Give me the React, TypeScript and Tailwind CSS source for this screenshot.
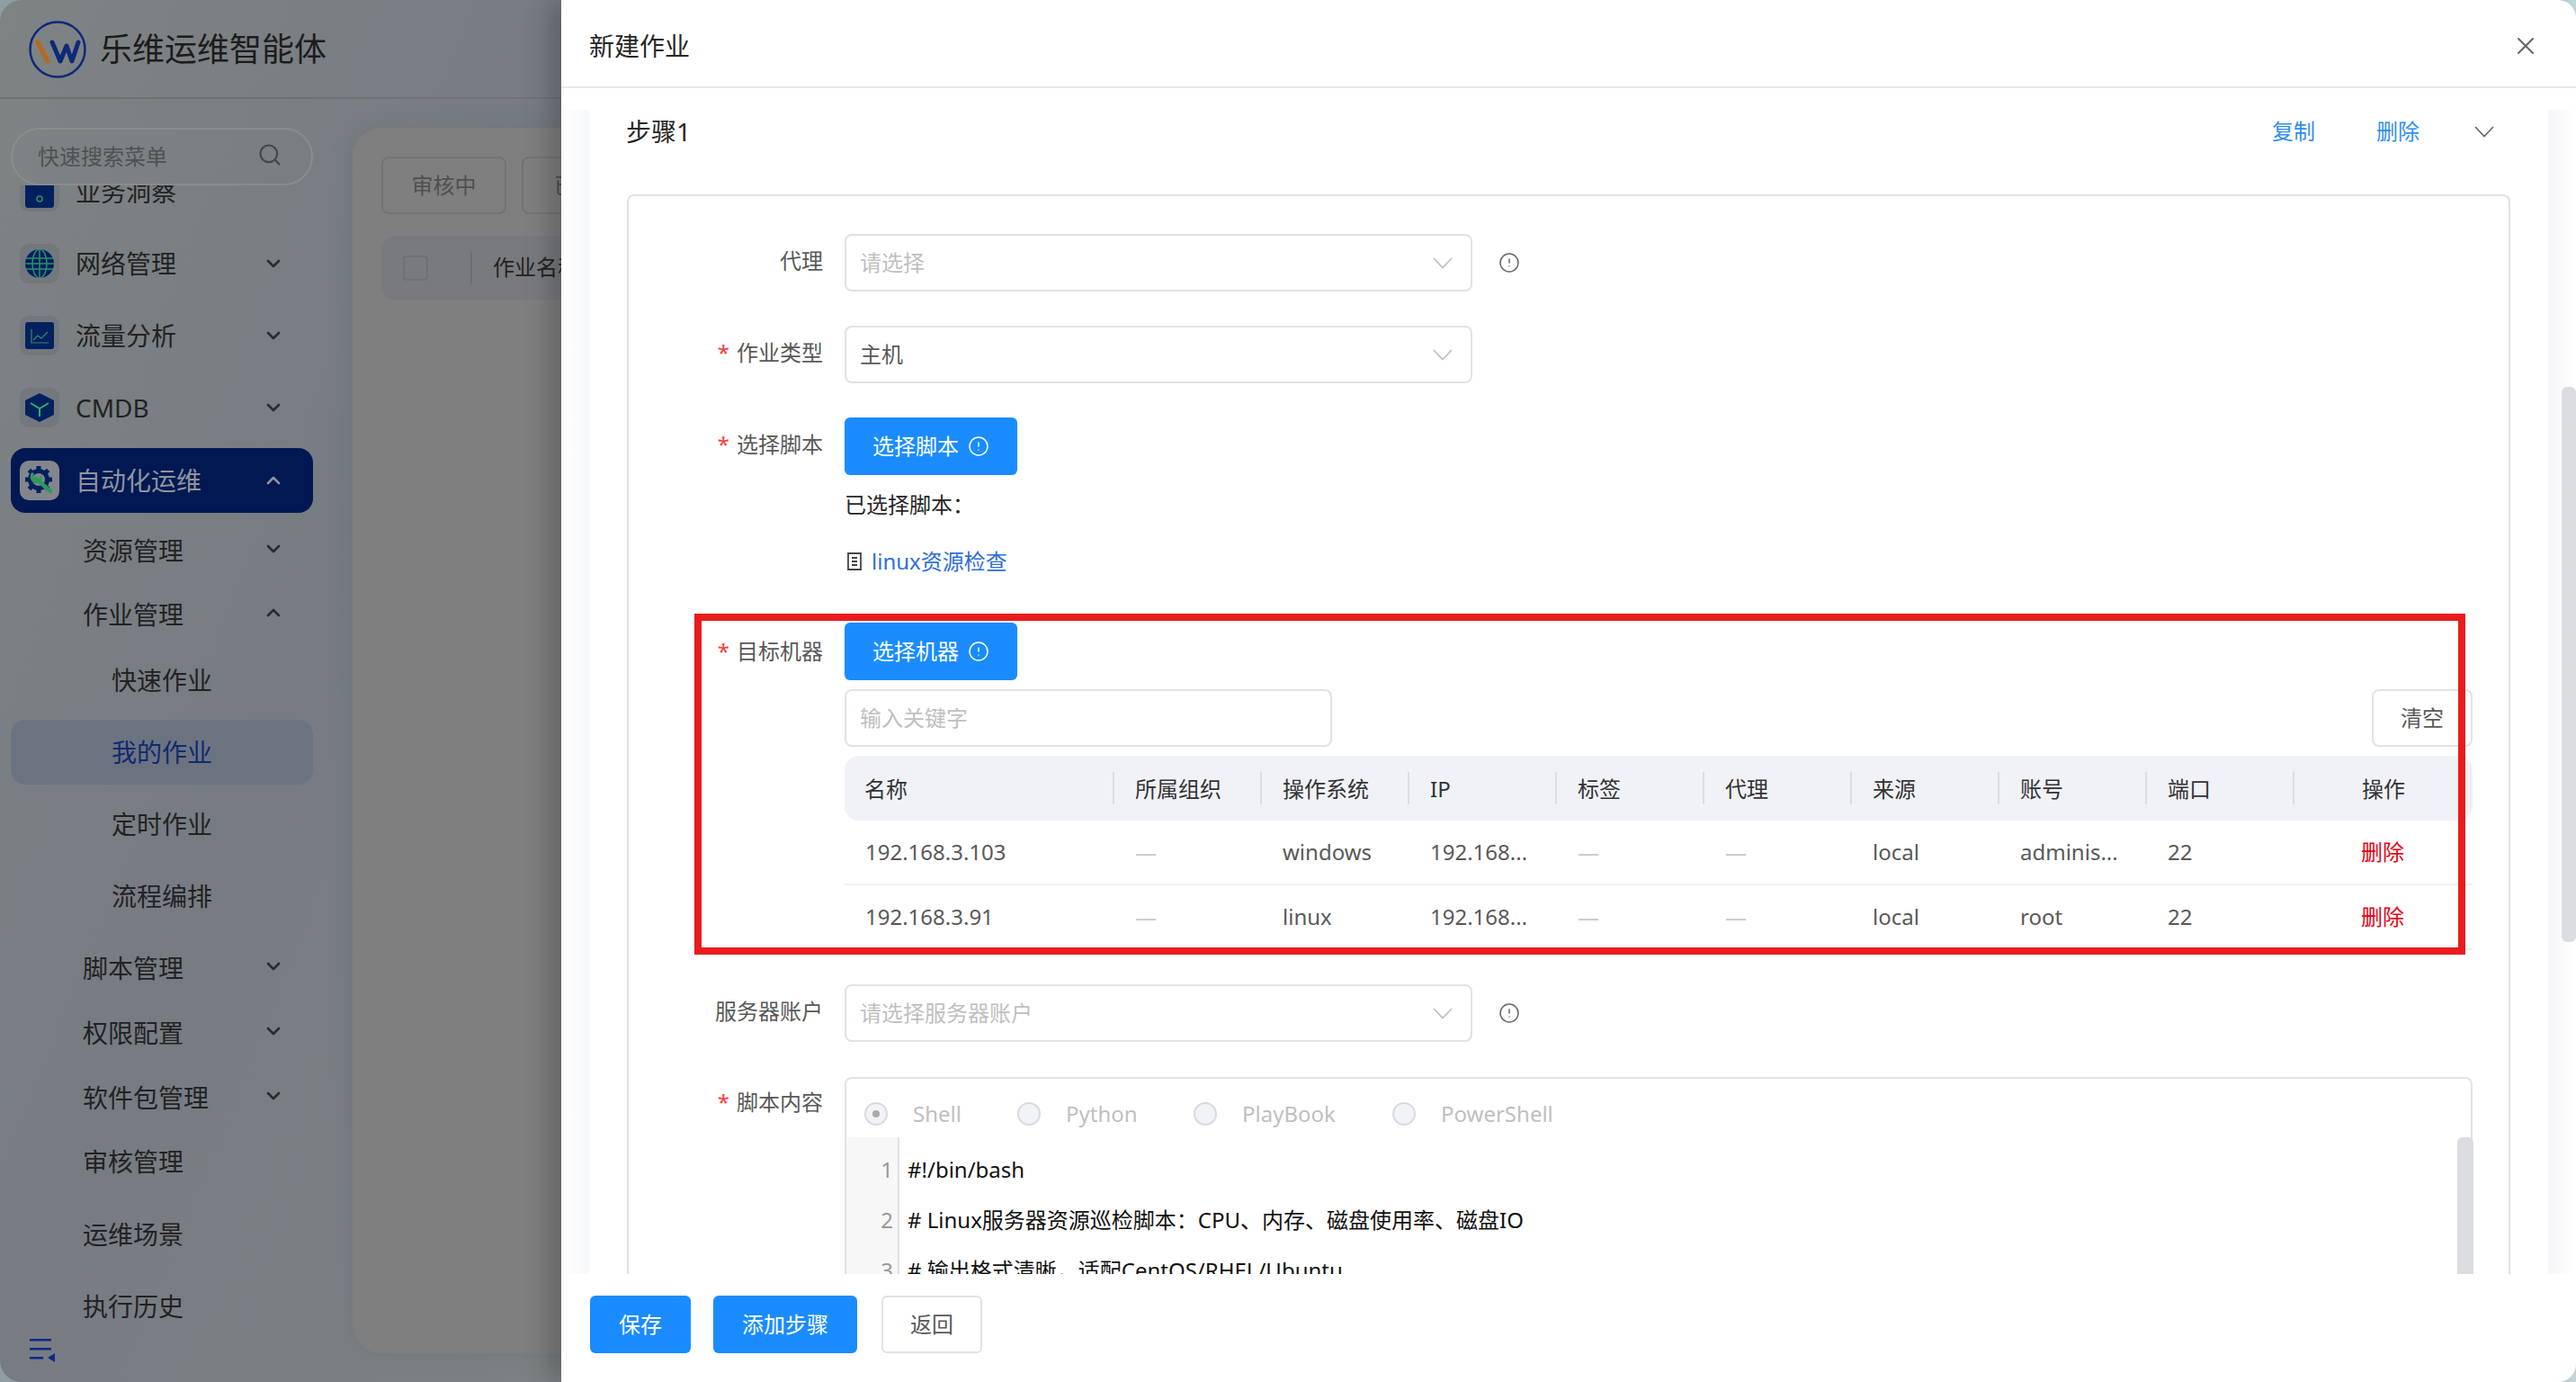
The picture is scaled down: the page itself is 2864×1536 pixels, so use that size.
import { ChevronDown, ChevronUp, CircleAlert, Search, X } from 'lucide-react';

const font = { fontFamily: '"Noto Sans", "Noto Sans CJK SC", sans-serif' };

function Logo() {
  return (
    <svg width="64" height="64" viewBox="0 0 64 64" fill="none">
      <circle cx="32" cy="32" r="30.5" stroke="#0d2a78" strokeWidth="2.5" />
      <path d="M10 24l11 21" stroke="#b9681f" strokeWidth="5" strokeLinecap="round" />
      <path d="M26 24l9 21 7-17 6 17 7-21" stroke="#0d2a78" strokeWidth="5" strokeLinecap="round" strokeLinejoin="round" />
    </svg>
  );
}

function BoardIcon() {
  return (
    <svg width="32" height="36" viewBox="0 0 32 36" fill="none">
      <rect width="32" height="36" rx="3" fill="#03205e" />
      <circle cx="16" cy="26" r="3" stroke="#2f8f6a" strokeWidth="1.5" />
    </svg>
  );
}

function GlobeIcon() {
  return (
    <svg width="32" height="32" viewBox="0 0 32 32" fill="none">
      <circle cx="16" cy="16" r="16" fill="#03205e" />
      <ellipse cx="16" cy="16" rx="8" ry="16" stroke="#2f8f6a" strokeWidth="1.5" />
      <path d="M16 0v32M1 10h30M0 16h32M1 22h30" stroke="#2f8f6a" strokeWidth="1.5" />
    </svg>
  );
}

function ChartIcon() {
  return (
    <svg width="32" height="30" viewBox="0 0 32 30" fill="none">
      <rect width="32" height="30" rx="3" fill="#03205e" />
      <path d="M7 8v15h19M9 20l5-5 4 3 7-7" stroke="#2f8f6a" strokeWidth="1.2" />
    </svg>
  );
}

function CubeIcon() {
  return (
    <svg width="32" height="32" viewBox="0 0 32 32" fill="none">
      <path d="M16 0l16 8v16l-16 8-16-8V8z" fill="#03205e" />
      <path d="M6 11l10 6 10-6M16 17v9" stroke="#2bae66" strokeWidth="2" />
    </svg>
  );
}

function GearIcon() {
  return (
    <svg width="32" height="32" viewBox="0 0 32 32" fill="none">
      <circle cx="15" cy="15" r="9.5" stroke="#03205e" strokeWidth="5" />
      <path d="M15 0v6M15 24v6M0 15h6M24 15h6M4.4 4.4l4.2 4.2M21.4 21.4l4.2 4.2M4.4 25.6l4.2-4.2M21.4 8.6l4.2-4.2" stroke="#03205e" strokeWidth="5" />
      <path d="M12 14l16 14" stroke="#2b9a5a" strokeWidth="4.5" strokeLinecap="round" />
      <path d="M9 8a5.5 5.5 0 0 0 6 9" stroke="#2b9a5a" strokeWidth="3.5" />
      <path d="M16 17a5.5 5.5 0 0 0 1-6" stroke="#2b9a5a" strokeWidth="2.5" />
    </svg>
  );
}

function FoldIcon() {
  return (
    <svg width="30" height="26" viewBox="0 0 30 26" fill="#0b2a86">
      <rect x="1" y="0" width="24" height="2.5" />
      <rect x="1" y="10" width="24" height="2.5" />
      <rect x="1" y="20" width="15" height="2.5" />
      <path d="M29 16v10l-8-5z" />
    </svg>
  );
}

function TopItem({ label, icon, active, mt, noArrow }: { label: string; icon: React.ReactNode; active?: boolean; mt?: string; noArrow?: boolean }) {
  return (
    <div className={`flex h-[72px] w-[336px] shrink-0 items-center rounded-[16px] pr-[32px] pl-[10px] ${mt ?? 'mt-[8px]'} ${active ? 'bg-[#011853]' : ''}`}>
      <div className={`flex h-[44px] w-[44px] items-center justify-center overflow-hidden rounded-[10px] ${active ? 'bg-[#82868c]' : 'bg-[#73787f]'}`}>{icon}</div>
      <span className={`ml-[18px] flex-1 text-[28px] leading-[40px] ${active ? 'text-[#8f949c]' : 'text-[#222222]'}`}>{label}</span>
      {noArrow ? null : active ? (
        <ChevronUp size={24} strokeWidth={2.6} className="text-[#8f949c]" />
      ) : (
        <ChevronDown size={24} strokeWidth={2.6} className="text-[#2a2a2a]" />
      )}
    </div>
  );
}

function SubItem({ label, up, mt }: { label: string; up?: boolean; mt: string }) {
  const Icon = up ? ChevronUp : ChevronDown;
  return (
    <div className={`flex h-[64px] w-[336px] shrink-0 items-center pr-[32px] pl-[80px] ${mt}`}>
      <span className="flex-1 text-[28px] leading-[40px] text-[#222222]">{label}</span>
      <Icon size={24} strokeWidth={2.6} className="-mt-[4px] text-[#2a2a2a]" />
    </div>
  );
}

function LeafItem({ label, pl, mt, active }: { label: string; pl: string; mt: string; active?: boolean }) {
  return (
    <div className={`flex h-[72px] w-[336px] shrink-0 items-center rounded-[16px] ${pl} ${mt} ${active ? 'bg-[#6c7380]' : ''}`}>
      <span className={`text-[28px] leading-[40px] ${active ? 'text-[#0f2a70]' : 'text-[#222222]'}`}>{label}</span>
    </div>
  );
}

function Sidebar() {
  return (
    <div className="flex h-[1426px] w-[392px] shrink-0 flex-col">
      <div className="mt-[32px] ml-[12px] flex h-[64px] w-[336px] shrink-0 items-center justify-between rounded-full border-2 border-[#8a8c8d] pr-[32px] pl-[28px]">
        <span className="text-[24px] leading-[32px] text-[#4f5153]">快速搜索菜单</span>
        <Search size={28} strokeWidth={1.8} className="-mt-[4px] text-[#444444]" />
      </div>
      <div className="flex flex-1 flex-col overflow-hidden pl-[12px]">
        <div className="-mt-[37px]">
          <TopItem label="业务洞察" icon={<BoardIcon />} noArrow />
        </div>
        <TopItem label="网络管理" icon={<GlobeIcon />} />
        <TopItem label="流量分析" icon={<ChartIcon />} />
        <TopItem label="CMDB" icon={<CubeIcon />} />
        <TopItem label="自动化运维" icon={<GearIcon />} active mt="mt-[9px]" />
        <SubItem label="资源管理" mt="mt-[10px]" />
        <SubItem label="作业管理" up mt="mt-[7px]" />
        <LeafItem label="快速作业" pl="pl-[112px]" mt="mt-[5px]" />
        <LeafItem label="我的作业" pl="pl-[112px]" mt="mt-[8px]" active />
        <LeafItem label="定时作业" pl="pl-[112px]" mt="mt-[8px]" />
        <LeafItem label="流程编排" pl="pl-[112px]" mt="mt-[8px]" />
        <SubItem label="脚本管理" mt="mt-[12px]" />
        <SubItem label="权限配置" mt="mt-[8px]" />
        <SubItem label="软件包管理" mt="mt-[8px]" />
        <LeafItem label="审核管理" pl="pl-[80px]" mt="mt-[3px]" />
        <LeafItem label="运维场景" pl="pl-[80px]" mt="mt-[9px]" />
        <LeafItem label="执行历史" pl="pl-[80px]" mt="mt-[8px]" />
      </div>
      <div className="h-[48px] shrink-0 pl-[32px]">
        <FoldIcon />
      </div>
    </div>
  );
}

function BackgroundPage() {
  return (
    <div className="flex h-full w-[624px] shrink-0 flex-col overflow-hidden rounded-l-[24px] bg-gradient-to-br from-[#7e8384] via-[#767c82] to-[#7d8183]">
      <div className="flex h-[110px] shrink-0 items-center border-b-2 border-[#6f7172] pt-[2px] pl-[32px]">
        <Logo />
        <span className="ml-[15px] text-[36px] leading-[48px] text-[#1c1c1c]">乐维运维智能体</span>
      </div>
      <div className="flex flex-1">
        <Sidebar />
        <div className="mt-[32px] h-[1362px] flex-1 rounded-l-[32px] bg-[#7f7f7f] pt-[32px] pl-[32px] shadow-[0_0_24px_rgba(90,100,110,0.25)]">
          <div className="flex gap-[17px]">
            <div className="flex h-[64px] w-[139px] shrink-0 items-center justify-center rounded-[8px] border-2 border-[#737373] text-[24px] text-[#4f4f4f]">审核中</div>
            <div className="flex h-[64px] w-[139px] shrink-0 items-center rounded-[8px] border-2 border-[#737373] pl-[34px] text-[24px] text-[#4f4f4f]">已通过</div>
          </div>
          <div className="mt-[24px] flex h-[72px] w-[300px] items-center rounded-l-[16px] bg-[#797a7e] pl-[24px]">
            <div className="h-[28px] w-[28px] rounded-[4px] border-2 border-[#707075]" />
            <div className="ml-[47px] h-[36px] border-l-2 border-[#6c6c70]" />
            <span className="mb-[2px] ml-[23px] whitespace-nowrap text-[24px] text-[#222222]">作业名称</span>
          </div>
        </div>
      </div>
    </div>
  );
}

function SelectChevron({ stroke = '#bdbdbd' }: { stroke?: string }) {
  return (
    <svg width="22" height="13" viewBox="0 0 22 13" fill="none">
      <path d="M1 1l10 10.5L21 1" stroke={stroke} strokeWidth="1.6" />
    </svg>
  );
}

function Info() {
  return <CircleAlert size={24} strokeWidth={1.5} className="text-[#666666]" />;
}

function Label({ text, required, pb = 'pb-[4px]' }: { text: string; required?: boolean; pb?: string }) {
  return (
    <div className={`flex h-[64px] w-[216px] shrink-0 items-center justify-end text-[24px] text-[#595959] ${pb}`}>
      {required && <span className="mr-[8px] text-[#f5413a]">*</span>}
      {text}
    </div>
  );
}

function SelectBox({ value, placeholder }: { value?: string; placeholder?: string }) {
  return (
    <div className="flex h-[64px] w-[698px] items-center justify-between rounded-[8px] border-2 border-[#e2e2e2] pr-[20px] pl-[15px] text-[24px]">
      {value ? <span className="text-[#595959]">{value}</span> : <span className="text-[#bfbfbf]">{placeholder}</span>}
      <SelectChevron />
    </div>
  );
}

function BlueButton({ text, info, width }: { text: string; info?: boolean; width: string }) {
  return (
    <div className={`flex h-[64px] items-center justify-center gap-[10px] rounded-[6px] bg-[#1a8cff] text-[24px] text-white ${width}`}>
      {text}
      {info && <CircleAlert size={24} strokeWidth={1.5} />}
    </div>
  );
}

const columns = ['所属组织', '操作系统', 'IP', '标签', '代理', '来源', '账号', '端口'];

const machines = [
  ['192.168.3.103', '—', 'windows', '192.168...', '—', '—', 'local', 'adminis...', '22'],
  ['192.168.3.91', '—', 'linux', '192.168...', '—', '—', 'local', 'root', '22'],
];

function MachineTable() {
  return (
    <div className="mt-[10px]">
      <div className="grid h-[72px] grid-cols-[298px_repeat(8,164px)_1fr] items-center rounded-[16px] bg-[#f0f2f7] text-[24px] text-[#333333]">
        <div className="pt-[2px] pl-[22px]">名称</div>
        {columns.map((c) => (
          <div key={c} className="flex h-[36px] items-center border-l-2 border-[#dcdde2] pt-[2px] pl-[23px]">{c}</div>
        ))}
        <div className="flex h-[36px] items-center justify-center border-l-2 border-[#dcdde2] pt-[2px]">操作</div>
      </div>
      {machines.map((row) => (
        <div key={row[0]} className="grid h-[72px] grid-cols-[298px_repeat(8,164px)_1fr] items-center border-b-2 border-[#f0f0f0] text-[24px] text-[#595959]">
          {row.map((cell, i) => (
            <div key={i} className={i === 0 ? 'pl-[23px]' : cell === '—' ? 'pl-[25px] text-[#c8c8c8]' : 'pl-[25px]'}>{cell}</div>
          ))}
          <div className="text-center text-[#e60012]">删除</div>
        </div>
      ))}
    </div>
  );
}

const scriptTypes = [
  { name: 'Shell', width: 'w-[170px]', on: true },
  { name: 'Python', width: 'w-[196px]' },
  { name: 'PlayBook', width: 'w-[221px]' },
  { name: 'PowerShell', width: 'w-[240px]' },
];

const codeLines = [
  '#!/bin/bash',
  '# Linux服务器资源巡检脚本：CPU、内存、磁盘使用率、磁盘IO',
  '# 输出格式清晰，适配CentOS/RHEL/Ubuntu',
];

function ScriptBox() {
  return (
    <div className="relative flex-1 rounded-t-[8px] border-2 border-b-0 border-[#e2e2e2]">
      <div className="flex h-[65px] items-center pt-[12px] pl-[20px] text-[24px] text-[#bfbfbf]">
        {scriptTypes.map((t) => (
          <div key={t.name} className={`flex shrink-0 items-center ${t.width}`}>
            <span className="flex h-[26px] w-[26px] items-center justify-center rounded-full border-2 border-[#d9d9de] bg-[#f2f3f6]">
              {t.on && <span className="h-[8px] w-[8px] rounded-full bg-[#aaaaaa]" />}
            </span>
            <span className="ml-[28px]">{t.name}</span>
          </div>
        ))}
      </div>
      <div className="flex text-[24px]">
        <div className="w-[59px] shrink-0 border-r-2 border-[#e0e0e0] bg-[#f7f7f7] pt-[8px] pr-[5px] text-right text-[#999999]">
          {codeLines.map((_, i) => (
            <div key={i} className="h-[56px] leading-[56px]">{i + 1}</div>
          ))}
        </div>
        <div className="pt-[8px] pl-[9px] whitespace-nowrap text-[#111111]">
          {codeLines.map((line) => (
            <div key={line} className="h-[56px] leading-[56px]">{line}</div>
          ))}
        </div>
      </div>
      <div className="absolute top-[65px] -right-[3px] h-[200px] w-[18px] rounded-t-[6px] bg-[#dcdde0]" />
    </div>
  );
}

function StepCard() {
  return (
    <div className="mx-[42px] mt-[46px] rounded-t-[8px] border-2 border-b-0 border-[#e2e2e2] pt-[42px] pr-[40px]">
      <div className="flex gap-[24px]">
        <Label text="代理" />
        <SelectBox placeholder="请选择" />
        <div className="flex h-[64px] items-center pl-[5px]"><Info /></div>
      </div>
      <div className="mt-[38px] flex gap-[24px]">
        <Label text="作业类型" required />
        <SelectBox value="主机" />
      </div>
      <div className="mt-[38px] flex gap-[24px]">
        <Label text="选择脚本" required />
        <div>
          <BlueButton text="选择脚本" info width="w-[192px]" />
          <div className="flex h-[66px] items-center text-[24px] text-[#262626]">已选择脚本：</div>
          <div className="flex h-[60px] items-center text-[24px] text-[#2f6fd8]">
            <svg width="22" height="22" viewBox="0 0 22 22" fill="none" stroke="#444444" strokeWidth="1.8" className="mr-[8px]">
              <path d="M4 2h14v18H4zM8 7h6M8 11h6M8 15h6" />
            </svg>
            linux资源检查
          </div>
        </div>
      </div>
      <div className="relative mt-[38px] flex gap-[24px]">
        <Label text="目标机器" required pb="pb-0" />
        <div className="flex-1">
          <BlueButton text="选择机器" info width="w-[192px]" />
          <div className="mt-[10px] flex justify-between">
            <div className="flex h-[64px] w-[542px] items-center rounded-[8px] border-2 border-[#e2e2e2] pl-[15px] text-[24px] text-[#bfbfbf]">输入关键字</div>
            <div className="flex h-[64px] w-[112px] items-center justify-center rounded-[8px] border-2 border-[#e2e2e2] text-[24px] text-[#595959]">清空</div>
          </div>
          <MachineTable />
        </div>
        <div className="absolute -top-[10px] right-[8px] -bottom-[5px] left-[73px] border-8 border-[#e81c1c]" />
      </div>
      <div className="mt-[38px] flex gap-[24px]">
        <Label text="服务器账户" />
        <SelectBox placeholder="请选择服务器账户" />
        <div className="flex h-[64px] items-center pl-[5px]"><Info /></div>
      </div>
      <div className="mt-[39px] flex gap-[24px]">
        <Label text="脚本内容" required pb="pb-[8px]" />
        <ScriptBox />
      </div>
    </div>
  );
}

function Drawer() {
  return (
    <div className="flex h-full flex-1 flex-col overflow-hidden rounded-r-[20px] bg-white shadow-[-12px_0_28px_rgba(0,0,0,0.22)]">
      <div className="flex h-[98px] shrink-0 items-center justify-between border-b-2 border-[#e8e8e8] pt-[6px] pr-[40px] pl-[31px]">
        <span className="text-[28px] text-[#262626]">新建作业</span>
        <X size={32} strokeWidth={1.5} className="text-[#666666]" />
      </div>
      <div className="mt-[24px] flex h-[1294px] shrink-0">
        <div className="w-[31px] shrink-0 bg-gradient-to-r from-white to-[#f7f8fa]" />
        <div className="flex-1 overflow-hidden">
          <div className="flex h-[48px] items-center justify-between pr-[60px] pl-[41px]">
            <span className="text-[28px] text-[#262626]">步骤1</span>
            <div className="flex items-center text-[24px] text-[#2f8fec]">
              <span>复制</span>
              <span className="ml-[68px]">删除</span>
              <span className="ml-[61px]"><SelectChevron stroke="#666666" /></span>
            </div>
          </div>
          <StepCard />
        </div>
        <div className="relative w-[31px] shrink-0 bg-gradient-to-r from-[#f5f6f9] to-white">
          <div className="absolute top-[308px] right-0 h-[617px] w-[16px] rounded-[6px] bg-[#dcdde0]" />
        </div>
      </div>
      <div className="flex flex-1 items-start pt-[24px] pl-[32px]">
        <BlueButton text="保存" width="w-[112px]" />
        <div className="ml-[25px]">
          <BlueButton text="添加步骤" width="w-[160px]" />
        </div>
        <div className="ml-[27px] flex h-[64px] w-[112px] items-center justify-center rounded-[6px] border-2 border-[#e2e2e2] text-[24px] text-[#595959]">返回</div>
      </div>
    </div>
  );
}

export default function App() {
  return (
    <div style={font} className="flex h-[1536px] w-[2864px] overflow-hidden bg-[linear-gradient(to_right,#8f9ea2_50%,#c5d9dc_50%)]">
      <BackgroundPage />
      <Drawer />
    </div>
  );
}
